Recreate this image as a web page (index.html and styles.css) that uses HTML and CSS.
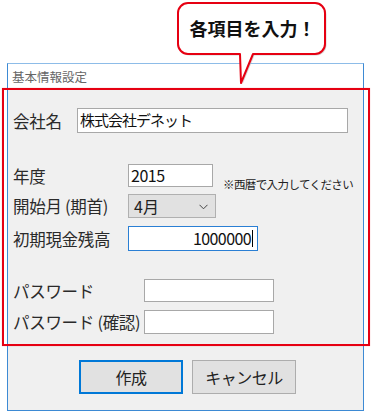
FILE: index.html
```html
<!DOCTYPE html>
<html lang="ja">
<head>
<meta charset="utf-8">
<link rel="stylesheet" href="styles.css">
</head>
<body>
<div class="page">
  <div class="window">
    <div class="titlebar">基本情報設定</div>
    <div class="content">
      <div class="row r1">
        <div class="label w64">会社名</div>
        <div class="field f-company">株式会社デネット</div>
      </div>
      <div class="row r2">
        <div class="label w115">年度</div>
        <div class="field f-year">2015</div>
        <div class="note">※西暦で入力してください</div>
      </div>
      <div class="row r3">
        <div class="label w115">開始月 (期首)</div>
        <div class="select">
          <span>4月</span>
          <svg class="chev" width="9" height="6" viewBox="0 0 9 6"><path d="M0.5 0.8 L4.5 4.8 L8.5 0.8" fill="none" stroke="#444" stroke-width="1"/></svg>
        </div>
      </div>
      <div class="row r4">
        <div class="label w115">初期現金残高</div>
        <div class="field f-cash focus"><span>1000000</span><span class="caret"></span></div>
      </div>
      <div class="row r5">
        <div class="label w131">パスワード</div>
        <div class="field f-pass"></div>
      </div>
      <div class="row r6">
        <div class="label w131">パスワード (確認)</div>
        <div class="field f-pass2"></div>
      </div>
      <div class="buttons">
        <div class="btn primary">作成</div>
        <div class="btn">キャンセル</div>
      </div>
    </div>
  </div>

  <div class="redbox"></div>

  <div class="callout">
    <svg class="bubble" width="170" height="90" viewBox="170 0 170 90">
      <path d="M188 3 H315 A10 10 0 0 1 325 13 V44 A10 10 0 0 1 315 54 H253 L241 83 L240 54 H188 A10 10 0 0 1 178 44 V13 A10 10 0 0 1 188 3 Z" fill="#bbb" transform="translate(1.5,1.5)" opacity="0.6"/>
      <path d="M188 3 H315 A10 10 0 0 1 325 13 V44 A10 10 0 0 1 315 54 H253 L241 83 L240 54 H188 A10 10 0 0 1 178 44 V13 A10 10 0 0 1 188 3 Z" fill="#fff" stroke="#e60012" stroke-width="2" stroke-linejoin="round"/>
    </svg>
    <div class="callout-text">各項目を入力！</div>
  </div>
</div>
</body>
</html>
```

FILE: styles.css
```css
* { box-sizing: border-box; }
html, body {
  margin: 0;
  padding: 0;
  background: #fff;
}
body {
  font-family: "Noto Sans CJK JP", "Noto Sans", sans-serif;
  color: #222;
}
.page {
  position: relative;
  width: 372px;
  height: 412px;
  padding-top: 63px;
  overflow: hidden;
}
.window {
  margin-left: 7px;
  width: 357px;
  height: 348px;
  border: 1px solid #3d8ad4;
  border-top-color: #8dbce8;
  display: flex;
  flex-direction: column;
}
.titlebar {
  height: 25px;
  background: #fff;
  font-size: 12.5px;
  line-height: 25px;
  color: #666;
  padding-left: 4px;
  flex: none;
}
.content {
  flex: 1;
  background: #f0f0f0;
  padding: 19px 0 0 5px;
  display: flex;
  flex-direction: column;
}
.row {
  display: flex;
  align-items: center;
  flex: none;
}
.r1 { height: 25px; }
.r2 { height: 23px; margin-top: 31px; }
.r3 { height: 24px; margin-top: 7px; }
.r4 { height: 25px; margin-top: 8px; }
.r5 { height: 23px; margin-top: 28px; }
.r6 { height: 24px; margin-top: 8px; }
.label {
  font-size: 16.5px;
  color: #2a2a2a;
  white-space: nowrap;
  flex: none;
  letter-spacing: -0.3px;
}
.w64 { width: 64px; }
.w115 { width: 115px; }
.w131 { width: 131px; }
.field {
  height: 100%;
  background: #fff;
  border: 1px solid #a8a8a8;
  font-size: 15px;
  line-height: 21px;
  padding: 0 2px;
  color: #111;
  white-space: nowrap;
  flex: none;
}
.f-company { width: 271px; letter-spacing: -1px; }
.f-year { width: 85px; font-size: 16px; letter-spacing: -0.5px; }
.f-cash {
  width: 130px;
  text-align: right;
  font-size: 16px;
  letter-spacing: -0.6px;
  padding-right: 4px;
  display: flex;
  justify-content: flex-end;
  align-items: center;
}
.f-pass, .f-pass2 { width: 130px; }
.focus { border-color: #2a7fd4; }
.caret {
  display: inline-block;
  width: 1px;
  height: 17px;
  background: #000;
  margin-left: 1px;
}
.note {
  font-size: 11.5px;
  color: #222;
  margin-left: 10px;
  align-self: flex-end;
  margin-bottom: -5px;
  letter-spacing: -0.6px;
  white-space: nowrap;
}
.select {
  width: 88px;
  height: 100%;
  background: #e1e1e1;
  border: 1px solid #b0b0b0;
  display: flex;
  align-items: center;
  justify-content: space-between;
  padding: 0 7px 0 5px;
  font-size: 16px;
  color: #222;
  flex: none;
}
.chev { margin-top: 2px; }
.buttons {
  display: flex;
  gap: 9px;
  margin-top: 26px;
  padding-left: 66px;
}
.btn {
  width: 104px;
  height: 34px;
  background: #e1e1e1;
  border: 1px solid #adadad;
  font-size: 16px;
  line-height: 32px;
  text-align: center;
  color: #222;
  letter-spacing: -0.5px;
}
.btn.primary {
  border: 2px solid #0078d7;
  line-height: 30px;
}
.redbox {
  position: absolute;
  left: 2px;
  top: 88px;
  width: 368px;
  height: 258px;
  border: 2px solid #e60012;
  box-shadow: 0 0 1px rgba(230,0,18,0.35);
  pointer-events: none;
}
.callout {
  position: absolute;
  left: 170px;
  top: 0;
  width: 170px;
  height: 90px;
}
.bubble {
  display: block;
}
.callout-text {
  position: absolute;
  left: 9px;
  top: 3px;
  width: 147px;
  height: 51px;
  display: flex;
  align-items: center;
  justify-content: center;
  font-size: 18px;
  font-weight: bold;
  color: #111;
  padding-bottom: 2px;
}
```
